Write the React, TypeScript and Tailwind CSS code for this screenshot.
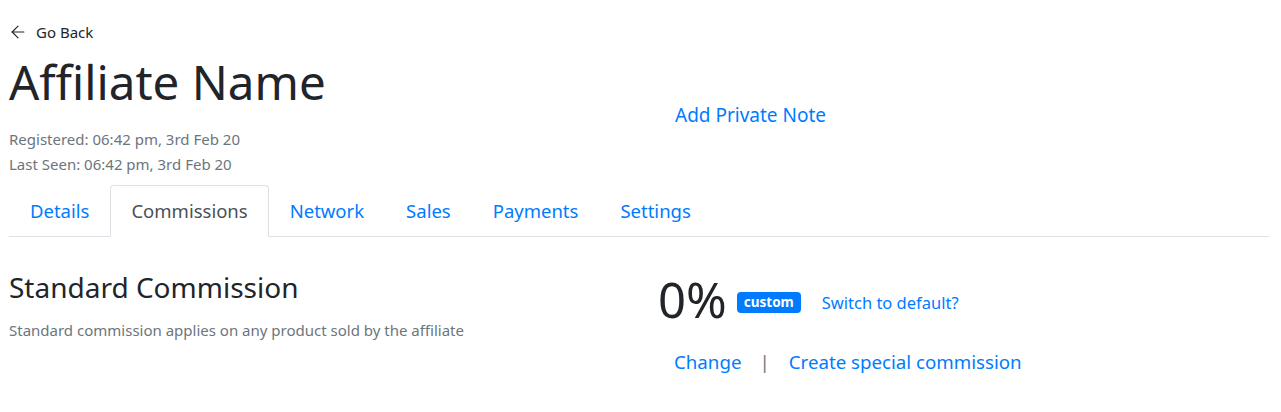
import { ArrowLeft } from "lucide-react";

const tabs = ["Details", "Commissions", "Network", "Sales", "Payments", "Settings"];

export default function App() {
  return (
    <div className="min-h-[412px] bg-white pl-[9px] pr-[12px] pt-[20px] text-[#212529] [font-family:'Noto_Sans',sans-serif]">
      {/* header */}
      <div className="flex">
        <div className="w-[630px]">
          <a className="flex items-center gap-[8px] text-[15px] leading-[24px] text-[#212529]">
            <ArrowLeft className="-ml-[1px] h-[20px] w-[20px]" strokeWidth={1.4} />
            Go Back
          </a>
          <h1 className="mt-[10px] text-[47.5px] leading-[56px] font-normal">Affiliate Name</h1>
          <div className="mt-[17px] text-[15px] leading-[25px] text-[#6c757d]">
            <div>Registered: 06:42 pm, 3rd Feb 20</div>
            <div>Last Seen: 06:42 pm, 3rd Feb 20</div>
          </div>
        </div>
        <div className="pl-[15px]">
          <button className="mt-[80px] px-[21px] text-[19px] leading-[30px] text-[#007bff]">
            Add Private Note
          </button>
        </div>
      </div>

      {/* tabs */}
      <div className="mt-[8px] flex border-b border-[#dee2e6]">
        {tabs.map((t) => (
          <div
            key={t}
            className={
              t === "Commissions"
                ? "-mb-px rounded-t-[4px] border border-[#dee2e6] border-b-white bg-white px-[20px] py-[11px] text-[18.5px] leading-[28px] text-[#495057]"
                : "-mb-px border border-transparent px-[20px] py-[11px] text-[18.5px] leading-[28px] text-[#007bff]"
            }
          >
            {t}
          </div>
        ))}
      </div>

      {/* commission */}
      <div className="mt-[32px] flex">
        <div className="w-[630px]">
          <h3 className="text-[28px] leading-[36px]">Standard Commission</h3>
          <p className="mt-[14px] text-[15px] leading-[22px] text-[#6c757d]">
            Standard commission applies on any product sold by the affiliate
          </p>
        </div>
        <div className="pl-[19px]">
          <div className="mt-[2px] flex items-center">
            <span className="text-[49px] leading-[56px]">0%</span>
            <span className="mt-[6px] ml-[10px] rounded-[4px] bg-[#007bff] px-[7px] text-[13.5px] leading-[21px] font-bold text-white">
              custom
            </span>
            <a className="mt-[8px] ml-[21px] text-[16.5px] text-[#007bff]">Switch to default?</a>
          </div>
          <div className="mt-[20px] flex items-center text-[18.7px] leading-[30px]">
            <a className="pl-[16px] text-[#007bff]">Change</a>
            <span className="pl-[18px] pr-[19px] text-[#6c757d]">|</span>
            <a className="text-[#007bff]">Create special commission</a>
          </div>
        </div>
      </div>
    </div>
  );
}
